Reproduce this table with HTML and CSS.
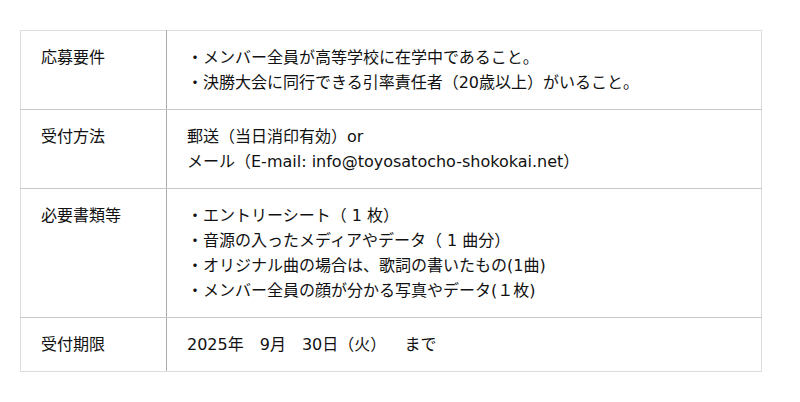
FILE: index.html
```html
<!DOCTYPE html>
<html lang="ja">
<head>
<meta charset="utf-8">
<link rel="stylesheet" href="styles.css">
</head>
<body>
<div class="wrap">
<table class="info">
  <tr>
    <th>応募要件</th>
    <td>・メンバー全員が高等学校に在学中であること。<br>・決勝大会に同行できる引率責任者（20歳以上）がいること。</td>
  </tr>
  <tr>
    <th>受付方法</th>
    <td>郵送（当日消印有効）or<br>メール（E-mail: info@toyosatocho-shokokai.net）</td>
  </tr>
  <tr>
    <th>必要書類等</th>
    <td>・エントリーシート（ 1 枚）<br>・音源の入ったメディアやデータ（ 1 曲分）<br>・オリジナル曲の場合は、歌詞の書いたもの(1曲)<br>・メンバー全員の顔が分かる写真やデータ(１枚)</td>
  </tr>
  <tr>
    <th>受付期限</th>
    <td>2025年　9月　30日（火）　&nbsp; まで</td>
  </tr>
</table>
</div>
</body>
</html>
```
FILE: styles.css
```css
html, body {
  margin: 0;
  padding: 0;
  background: #ffffff;
}
.wrap {
  padding: 30px 38px 0 20px;
}
.info {
  width: 742px;
  border-collapse: collapse;
  font-family: "DejaVu Sans", "Noto Sans CJK JP", sans-serif;
  font-size: 16px;
  line-height: 25px;
  color: #111111;
  border: 1px solid #dcdcdc;
}
.info th,
.info td {
  text-align: left;
  vertical-align: top;
  font-weight: normal;
  padding: 14px 20px;
  border-top: 1px solid #c8c8c8;
  border-bottom: 1px solid #c8c8c8;
}
.info th {
  width: 105px;
  border-right: 1px solid #ababab;
}
.info tr:first-child th,
.info tr:first-child td {
  border-top-color: #dcdcdc;
}
.info tr:last-child th,
.info tr:last-child td {
  border-bottom-color: #dcdcdc;
}
```
